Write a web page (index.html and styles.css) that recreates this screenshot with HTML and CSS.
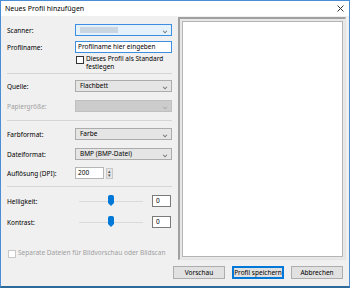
FILE: index.html
```html
<!DOCTYPE html>
<html lang="de">
<head>
  <meta charset="UTF-8">
  <title>Neues Profil hinzufügen</title>
  <link rel="stylesheet" href="styles.css">
</head>
<body>

<div class="window">
  <div class="titlebar">
    <span class="title">Neues Profil hinzufügen</span>
    <svg class="close" width="7" height="7" viewBox="0 0 7 7"><path d="M0.5 0.5 L6.5 6.5 M6.5 0.5 L0.5 6.5" stroke="#333" stroke-width="1"/></svg>
  </div>

  <div class="content">
    <div class="form">
      <div class="row r-scanner">
        <label>Scanner:</label>
        <div class="combo focus"><span class="blur"></span><span class="arrow"></span></div>
      </div>
      <div class="row r-name">
        <label>Profilname:</label>
        <div class="textbox">Profilname hier eingeben</div>
      </div>
      <div class="default-check">
        <span class="box"></span>
        <span>Dieses Profil als Standard<br>festlegen</span>
      </div>

      <div class="sep"></div>

      <div class="row r-first">
        <label>Quelle:</label>
        <div class="combo">Flachbett<span class="arrow"></span></div>
      </div>
      <div class="row">
        <label class="disabled">Papiergröße:</label>
        <div class="combo off"><span class="arrow"></span></div>
      </div>

      <div class="sep sep2"></div>

      <div class="row r-first r-farb">
        <label>Farbformat:</label>
        <div class="combo">Farbe<span class="arrow"></span></div>
      </div>
      <div class="row">
        <label>Dateiformat:</label>
        <div class="combo">BMP (BMP-Datei)<span class="arrow"></span></div>
      </div>
      <div class="row r-dpi">
        <label>Auflösung (DPI):</label>
        <div class="spin">
          <div class="textbox small">200</div>
          <div class="spin-btns"><span>▴</span><span>▾</span></div>
        </div>
      </div>

      <div class="sep sep3"></div>

      <div class="slider-row r-first-slider">
        <label>Helligkeit:</label>
        <div class="slider"><span class="track"></span><svg class="thumb" width="6" height="11" viewBox="0 0 6 11"><path d="M0 2 Q0 0 2 0 L4 0 Q6 0 6 2 L6 8 L3 11 L0 8 Z" fill="#0078d7"/></svg></div>
        <div class="num">0</div>
      </div>
      <div class="slider-row">
        <label>Kontrast:</label>
        <div class="slider"><span class="track"></span><svg class="thumb" width="6" height="11" viewBox="0 0 6 11"><path d="M0 2 Q0 0 2 0 L4 0 Q6 0 6 2 L6 8 L3 11 L0 8 Z" fill="#0078d7"/></svg></div>
        <div class="num">0</div>
      </div>

      <div class="separate-check">
        <span class="box"></span>
        <span>Separate Dateien für Bildvorschau oder Bildscan</span>
      </div>
    </div>

    <div class="preview">
      <div class="preview-inner"></div>
    </div>
  </div>

  <div class="buttons">
    <button>Vorschau</button>
    <button class="default">Profil speichern</button>
    <button>Abbrechen</button>
  </div>
</div>

</body>
</html>
```

FILE: styles.css
```css
html, body {
  margin: 0;
  padding: 0;
}

body {
  width: 350px;
  height: 288px;
  font-family: "Noto Sans", "Open Sans", sans-serif;
  font-size: 6.5px;
  color: #000;
  background: #f0f0f0;
}

.window {
  width: 350px;
  height: 288px;
  box-sizing: border-box;
  border: 1px solid #4a8fd6;
  border-bottom: 2px solid #2e6a99;
  background: #f0f0f0;
  display: flex;
  flex-direction: column;
}

.titlebar {
  height: 15px;
  background: #fff;
  display: flex;
  align-items: center;
  justify-content: space-between;
  padding: 0 5px 0 4px;
  font-size: 7px;
}

.content {
  display: flex;
  height: 245px;
}

.form {
  width: 170px;
  padding-left: 6px;
}

.row {
  display: flex;
  align-items: center;
  height: 12px;
  margin-top: 8px;
}

.row label,
.slider-row label {
  width: 68px;
  flex-shrink: 0;
}

.r-scanner {
  margin-top: 8px;
}

.r-name {
  margin-top: 5px;
}

.r-first {
  margin-top: 6px;
}

.r-farb {
  margin-top: 7px;
}

.r-dpi {
  margin-top: 7px;
}

label.disabled {
  color: #a0a0a0;
}

.combo {
  position: relative;
  box-sizing: border-box;
  width: 97px;
  height: 12px;
  background: #e5e5e5;
  border: 1px solid #acacac;
  padding-left: 4px;
  line-height: 10px;
}

.combo.focus {
  background: #e5f1fb;
  border-color: #3d8ee0;
}

.combo.off {
  background: #cccccc;
  border-color: #bfbfbf;
}

.combo .blur {
  display: block;
  width: 38px;
  height: 6px;
  margin-top: 2px;
  background: #c9d6e2;
}

.arrow {
  position: absolute;
  right: 4px;
  top: 4px;
  width: 3px;
  height: 3px;
  border-right: 1px solid #666;
  border-bottom: 1px solid #666;
  transform: rotate(45deg) scale(0.8);
}

.combo.off .arrow {
  border-color: #a8a8a8;
}

.textbox {
  box-sizing: border-box;
  width: 97px;
  height: 12px;
  background: #fff;
  border: 1px solid #3d8ee0;
  padding-left: 2px;
  line-height: 10px;
}

.textbox.small {
  width: 29px;
  border-color: #b5b5b5;
}

.spin {
  display: flex;
  align-items: center;
}

.spin-btns {
  display: flex;
  flex-direction: column;
  margin-left: 2px;
  width: 7px;
  height: 11px;
  background: #e5e5e5;
  border: 1px solid #c8c8c8;
  box-sizing: border-box;
  font-size: 5px;
  line-height: 4.5px;
  text-align: center;
  color: #555;
}

.default-check,
.separate-check {
  display: flex;
  align-items: flex-start;
  margin-left: 69px;
  margin-top: 2px;
  line-height: 8px;
}

.box {
  width: 6px;
  height: 6px;
  border: 1px solid #333;
  background: #fff;
  margin-right: 2px;
  margin-top: 1px;
  flex-shrink: 0;
}

.sep {
  height: 1px;
  width: 165px;
  background: #d5d5d5;
  margin-top: 2px;
}

.sep2 {
  margin-top: 8px;
}

.sep3 {
  margin-top: 7px;
}

.slider-row {
  display: flex;
  align-items: center;
  height: 12px;
  margin-top: 9px;
}

.r-first-slider {
  margin-top: 8px;
}

.slider {
  position: relative;
  width: 77px;
  height: 12px;
}

.track {
  position: absolute;
  left: 4px;
  right: 9px;
  top: 6px;
  height: 1px;
  background: #dadada;
}

.thumb {
  position: absolute;
  left: 33px;
  top: 0;
}

.num {
  box-sizing: border-box;
  width: 19px;
  height: 12px;
  background: #fff;
  border: 1px solid #7a7a7a;
  padding-left: 3px;
  line-height: 10px;
}

.separate-check {
  margin-left: 1px;
  margin-top: 21px;
  color: #a0a0a0;
}

.separate-check .box {
  border-color: #c8c8c8;
}

.preview {
  margin-left: 1px;
  margin-top: 1px;
  width: 168px;
  height: 243px;
  box-sizing: border-box;
  border-top: 2px solid #a0a0a0;
  border-left: 2px solid #a0a0a0;
  border-right: 1px solid #e3e3e3;
  border-bottom: 1px solid #e3e3e3;
  background: #e8e8e8;
  padding: 2px;
}

.preview-inner {
  height: 100%;
  box-sizing: border-box;
  background: #fff;
  border: 1px solid #b4b4b4;
}

.buttons {
  display: flex;
  justify-content: flex-end;
  gap: 7px;
  padding: 5px 6px 0 0;
}

button {
  width: 52px;
  height: 13px;
  padding: 0;
  font-family: "Noto Sans", "Open Sans", sans-serif;
  font-size: 6.5px;
  color: #000;
  background: #e1e1e1;
  border: 1px solid #adadad;
}

button.default {
  border: 1px solid #0078d7;
  box-shadow: inset 0 0 0 1px #0078d7;
}
```
